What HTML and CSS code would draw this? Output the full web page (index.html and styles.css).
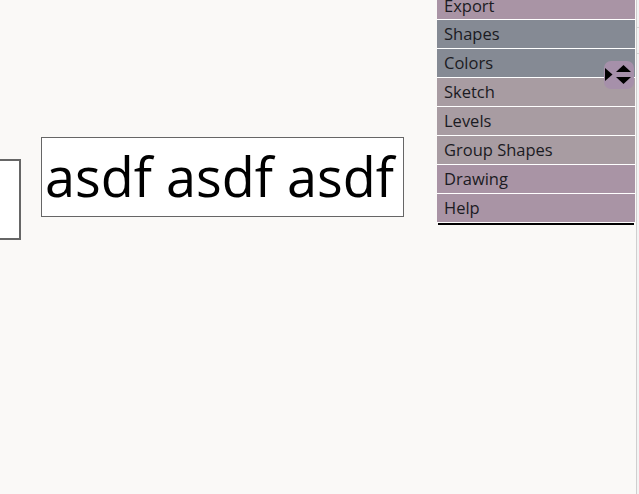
FILE: index.html
```html
<!DOCTYPE html>
<html>
<head>
<meta charset="utf-8">
<link rel="stylesheet" href="styles.css">
</head>
<body>
<div class="canvas">
  <div class="left-box"></div>
  <div class="text-box">asdf asdf asdf</div>
  <div class="menu">
    <div class="item purple export">Export</div>
    <div class="item slate">Shapes</div>
    <div class="item slate">Colors</div>
    <div class="item mauve">Sketch</div>
    <div class="item mauve">Levels</div>
    <div class="item mauve">Group Shapes</div>
    <div class="item purple">Drawing</div>
    <div class="item purple">Help</div>
    <div class="menu-end"></div>
  </div>
  <div class="toggle">
    <svg width="30" height="28" viewBox="0 0 30 28">
      <polygon points="1,7 8.5,13.5 1,20" fill="#000"/>
      <polygon points="19.5,4 27,11 12,11" fill="#000"/>
      <polygon points="12,16 27,16 19.5,23" fill="#000"/>
    </svg>
  </div>
  <div class="scroll-edge">
    <div class="tick t1"></div>
    <div class="tick t2"></div>
  </div>
</div>
</body>
</html>
```
FILE: styles.css
```css
html, body {
  margin: 0;
  padding: 0;
  background: #faf9f7;
  overflow: hidden;
}
.canvas {
  position: relative;
  width: 639px;
  height: 494px;
  font-family: "Open Sans", sans-serif;
}
.left-box {
  position: absolute;
  left: -10px;
  top: 159px;
  width: 27px;
  height: 77px;
  border: 2px solid #666;
  background: #fff;
}
.text-box {
  position: absolute;
  left: 41px;
  top: 137px;
  width: 358px;
  height: 78px;
  border: 1px solid #666;
  background: #fff;
  font-size: 54px;
  line-height: 77px;
  color: #000;
  padding-left: 3px;
  white-space: nowrap;
  overflow: hidden;
}
.menu {
  position: absolute;
  left: 437px;
  top: -9px;
  width: 198px;
  display: flex;
  flex-direction: column;
}
.item {
  height: 28px;
  border-bottom: 1px solid #fff;
  font-size: 16.5px;
  font-weight: 500;
  line-height: 28px;
  padding-left: 7px;
  color: #1b1b22;
}
.export { line-height: 29px; }
.purple { background: #a994a5; }
.slate { background: #858a94; }
.mauve { background: #a89ca2; }
.menu-end {
  height: 2px;
  margin: 0 1px;
  background: #000;
}
.toggle {
  position: absolute;
  left: 604px;
  top: 61px;
  width: 30px;
  height: 28px;
  border-radius: 7px;
  background: #a690aa;
}
.toggle svg { display: block; }
.scroll-edge {
  position: absolute;
  left: 636px;
  top: 0;
  width: 3px;
  height: 494px;
  border-left: 1px solid #cfcfcf;
  background: #f4f4f4;
  box-sizing: border-box;
}
.tick {
  position: absolute;
  left: 0;
  width: 3px;
  height: 1px;
  background: #d4d4d4;
}
.t1 { top: 27px; }
.t2 { top: 53px; }
```
